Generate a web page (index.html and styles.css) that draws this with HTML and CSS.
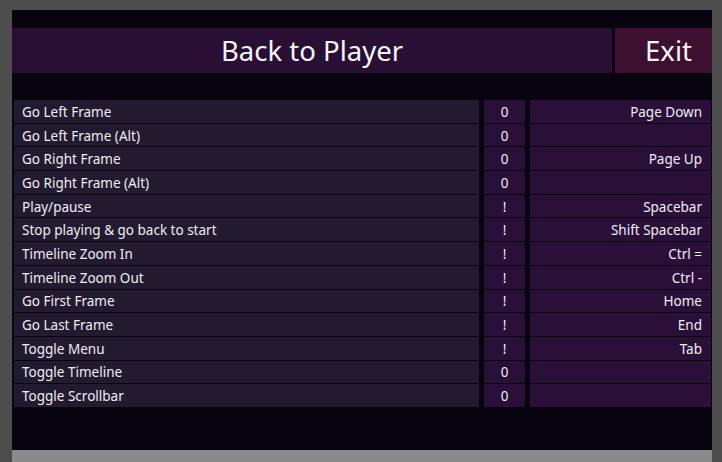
FILE: index.html
```html
<!DOCTYPE html>
<html>
<head>
<meta charset="utf-8">
<link rel="stylesheet" href="styles.css">
</head>
<body>
<div class="frame">
  <div class="screen">
    <div class="header">
      <div class="btn back">Back to Player</div>
      <div class="btn exit">Exit</div>
    </div>
    <div class="table">
      <div class="row"><div class="name">Go Left Frame</div><div class="flag">0</div><div class="key">Page Down</div></div>
      <div class="row"><div class="name">Go Left Frame (Alt)</div><div class="flag">0</div><div class="key"></div></div>
      <div class="row"><div class="name">Go Right Frame</div><div class="flag">0</div><div class="key">Page Up</div></div>
      <div class="row"><div class="name">Go Right Frame (Alt)</div><div class="flag">0</div><div class="key"></div></div>
      <div class="row"><div class="name">Play/pause</div><div class="flag">!</div><div class="key">Spacebar</div></div>
      <div class="row"><div class="name">Stop playing &amp; go back to start</div><div class="flag">!</div><div class="key">Shift Spacebar</div></div>
      <div class="row"><div class="name">Timeline Zoom In</div><div class="flag">!</div><div class="key">Ctrl =</div></div>
      <div class="row"><div class="name">Timeline Zoom Out</div><div class="flag">!</div><div class="key">Ctrl -</div></div>
      <div class="row"><div class="name">Go First Frame</div><div class="flag">!</div><div class="key">Home</div></div>
      <div class="row"><div class="name">Go Last Frame</div><div class="flag">!</div><div class="key">End</div></div>
      <div class="row"><div class="name">Toggle Menu</div><div class="flag">!</div><div class="key">Tab</div></div>
      <div class="row"><div class="name">Toggle Timeline</div><div class="flag">0</div><div class="key"></div></div>
      <div class="row"><div class="name">Toggle Scrollbar</div><div class="flag">0</div><div class="key"></div></div>
    </div>
  </div>
  <div class="scrollbar"></div>
</div>
</body>
</html>
```
FILE: styles.css
```css
html, body {
  margin: 0;
  padding: 0;
  background: #4d4d4d;
  width: 722px;
  height: 462px;
  overflow: hidden;
}
.frame {
  box-sizing: border-box;
  width: 722px;
  height: 462px;
  padding: 10px 10px 0 12px;
  display: flex;
  flex-direction: column;
}
.screen {
  flex: 1;
  background: #07040f;
  padding-top: 18px;
  font-family: "Noto Sans", sans-serif;
  color: #f0ecf4;
}
.scrollbar {
  height: 12px;
  background: #8a8a8a;
}
.header {
  display: flex;
  gap: 3px;
  height: 45px;
}
.btn {
  display: flex;
  align-items: center;
  justify-content: center;
  font-size: 27.5px;
  color: #f6f4f8;
}
.back {
  flex: 1;
  background: #2a0f35;
}
.exit {
  width: 97px;
  box-sizing: border-box;
  padding-left: 10px;
  background: #3d1030;
}
.table {
  margin: 27px 1px 0 2px;
  display: flex;
  flex-direction: column;
  gap: 1px;
}
.row {
  display: flex;
  gap: 5px;
  height: 22.7px;
  font-size: 13.5px;
}
.row > div {
  display: flex;
  align-items: center;
  padding-top: 1px;
  box-sizing: border-box;
}
.name {
  flex: 1;
  background: #221a2f;
  padding-left: 8px;
}
.flag {
  width: 41px;
  justify-content: center;
  background: #2a1038;
}
.key {
  width: 181px;
  justify-content: flex-end;
  padding-right: 9px;
  background: #2a1038;
}
```
